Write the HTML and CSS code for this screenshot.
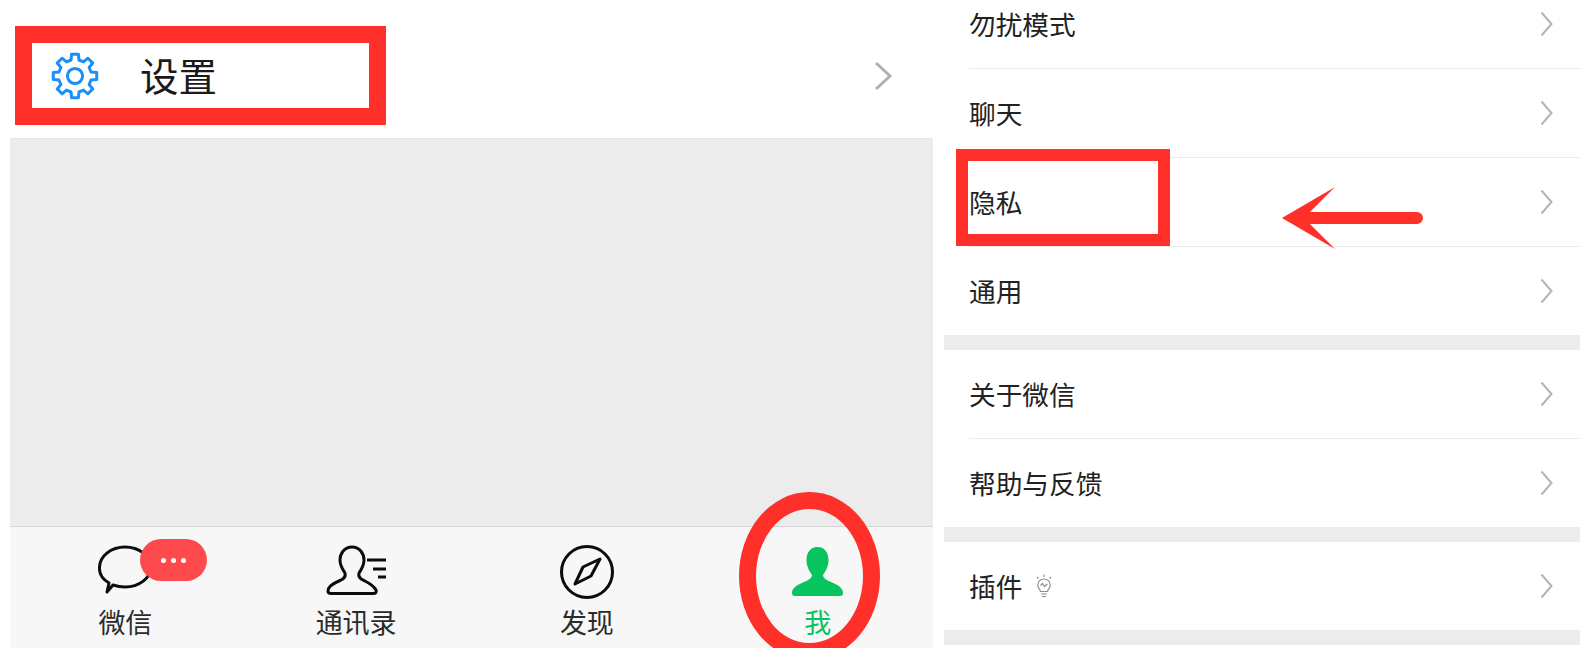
FILE: index.html
```html
<!DOCTYPE html>
<html lang="zh-CN">
<head>
    <meta charset="UTF-8">
    <title>微信设置</title>
    <link rel="stylesheet" href="styles.css">
</head>
<body>
    <div class="page">
        <div class="panel-left">
            <div class="settings-row">
                <svg class="gear" viewBox="-25 -25 50 50">
                    <polygon points="-3.99,-16.01 -3.44,-21.73 3.44,-21.73 3.99,-16.01 8.5,-14.14 12.93,-17.8 17.8,-12.93 14.14,-8.5 16.01,-3.99 21.73,-3.44 21.73,3.44 16.01,3.99 14.14,8.5 17.8,12.93 12.93,17.8 8.5,14.14 3.99,16.01 3.44,21.73 -3.44,21.73 -3.99,16.01 -8.5,14.14 -12.93,17.8 -17.8,12.93 -14.14,8.5 -16.01,3.99 -21.73,3.44 -21.73,-3.44 -16.01,-3.99 -14.14,-8.5 -17.8,-12.93 -12.93,-17.8 -8.5,-14.14"/>
                    <circle r="7.6"/>
                </svg>
                <span class="settings-label">设置</span>
                <svg class="chevron-big" viewBox="0 0 18 30"><polyline points="2,2 16,15 2,28"/></svg>
            </div>
            <div class="empty-area"></div>
            <div class="tabbar">
                <div class="tab">
                    <svg class="tab-icon icon-chat" width="56" height="50" viewBox="0 0 56 50">
                        <path class="line" d="M9 47 L11 38 C4 34 1 28 1.5 22 C2 11 13 2 27 2 C41 2 53 11 53 22 C53 33 41 42 27 42 C22 42 18 41 15 40 Z"/>
                    </svg>
                    <span>微信</span>
                    <div class="badge"><i></i><i></i><i></i></div>
                </div>
                <div class="tab">
                    <svg class="tab-icon" width="60" height="50" viewBox="0 0 60 50">
                        <path class="line" d="M26 2 C18 2 14 9 14 15 C14 21 17 25 19 28 C20 32 18 34 14 35.5 C8 38 2 41 2 46 C2 48 3 48.5 5 48.5 L47 48.5 C50 48.5 51 47 50 45 C48 41 43 38 38 35.5 C34 34 32 32 33 28 C35 25 38 21 38 15 C38 9 34 2 26 2 Z"/>
                        <path class="line" d="M41 15 H60 M47 24 H60 M52 32 H60"/>
                    </svg>
                    <span>通讯录</span>
                </div>
                <div class="tab">
                    <svg class="tab-icon" width="54" height="54" viewBox="0 0 54 54">
                        <circle class="line" cx="27" cy="27" r="25.5"/>
                        <path class="line" d="M40 14 L31 31 L15 39 L23 22 Z"/>
                    </svg>
                    <span>发现</span>
                </div>
                <div class="tab tab-active">
                    <svg class="tab-icon" width="51" height="49" viewBox="0 0 51 49">
                        <path d="M25.5 0 C33 0 36.5 6 36.5 13 C36.5 20 33 25 31 28 C31 31 34 33 40 35.5 C46 38 51 41 51 46 C51 48 50 49 48 49 L3 49 C1 49 0 48 0 46 C0 41 5 38 11 35.5 C17 33 20 31 20 28 C18 25 14.5 20 14.5 13 C14.5 6 18 0 25.5 0 Z"/>
                    </svg>
                    <span>我</span>
                </div>
            </div>
            <div class="mark-box"></div>
            <div class="mark-ring"></div>
        </div>

        <div class="panel-right">
            <div class="menu">
                <div class="group">
                    <div class="item"><span>勿扰模式</span><svg class="chevron" viewBox="0 0 13 26"><polyline points="1.5,1.5 11.5,13 1.5,24.5"/></svg></div>
                    <div class="item"><span>聊天</span><svg class="chevron" viewBox="0 0 13 26"><polyline points="1.5,1.5 11.5,13 1.5,24.5"/></svg></div>
                    <div class="item"><span>隐私</span><svg class="chevron" viewBox="0 0 13 26"><polyline points="1.5,1.5 11.5,13 1.5,24.5"/></svg></div>
                    <div class="item"><span>通用</span><svg class="chevron" viewBox="0 0 13 26"><polyline points="1.5,1.5 11.5,13 1.5,24.5"/></svg></div>
                </div>
                <div class="gap"></div>
                <div class="group">
                    <div class="item"><span>关于微信</span><svg class="chevron" viewBox="0 0 13 26"><polyline points="1.5,1.5 11.5,13 1.5,24.5"/></svg></div>
                    <div class="item"><span>帮助与反馈</span><svg class="chevron" viewBox="0 0 13 26"><polyline points="1.5,1.5 11.5,13 1.5,24.5"/></svg></div>
                </div>
                <div class="gap"></div>
                <div class="group">
                    <div class="item">
                        <span>插件</span>
                        <svg class="bulb" viewBox="0 0 18 24">
                            <path d="M5.5 17.5 C5 15 2.8 14 2.8 11 C2.8 7.5 5.5 5 9 5 C12.5 5 15.2 7.5 15.2 11 C15.2 14 13 15 12.5 17.5 Z"/>
                            <path d="M6 20 H12 M7 22.5 H11 M9 0.5 V3 M2 3 L3.5 4.5 M16 3 L14.5 4.5 M5.5 11.5 L7.5 9.5 L9.5 12.5 L12.5 10"/>
                        </svg>
                        <svg class="chevron" viewBox="0 0 13 26"><polyline points="1.5,1.5 11.5,13 1.5,24.5"/></svg>
                    </div>
                </div>
                <div class="gap"></div>
            </div>
            <div class="mark-box-small"></div>
            <svg class="mark-arrow" viewBox="0 0 141 62">
                <path d="M0 31 L53 0 L28 25 L135 25 A6 6 0 0 1 135 37 L28 37 L53 62 Z"/>
            </svg>
        </div>
    </div>
</body>
</html>
```

FILE: styles.css
```css
* {
    margin: 0;
    padding: 0;
    box-sizing: border-box;
}

body {
    background: #fff;
    font-family: "Noto Sans CJK SC", "Liberation Sans", sans-serif;
    color: #1f1f1f;
    overflow: hidden;
}

.page {
    display: flex;
    height: 648px;
    padding-left: 10px;
    gap: 11px;
}

/* left screenshot */
.panel-left {
    position: relative;
    width: 923px;
    height: 648px;
    display: flex;
    flex-direction: column;
    overflow: hidden;
}

.settings-row {
    height: 138px;
    flex-shrink: 0;
    display: flex;
    align-items: center;
    padding: 14px 41px 1px 40px;
    background: #fff;
}

.gear {
    width: 50px;
    height: 50px;
    margin-right: 40px;
}

.gear polygon,
.gear circle {
    fill: none;
    stroke: #1a8ffa;
    stroke-width: 3;
    stroke-linejoin: round;
}

.settings-label {
    font-size: 38.5px;
    line-height: 50px;
    margin-bottom: 4px;
    color: #1a1a1a;
}

.chevron-big {
    width: 18px;
    height: 30px;
    margin-left: auto;
}

.chevron-big polyline {
    fill: none;
    stroke: #b0b0b0;
    stroke-width: 3;
}

.empty-area {
    flex: 1;
    background: #ececec;
    border-top: 1px solid #e4e4e4;
}

.tabbar {
    height: 122px;
    flex-shrink: 0;
    display: grid;
    grid-template-columns: repeat(4, 1fr);
    background: #f7f7f7;
    border-top: 1px solid #d6d6d6;
}

.tab {
    position: relative;
    display: flex;
    flex-direction: column;
    align-items: center;
    padding-top: 18px;
    font-size: 27px;
    color: #2b2b2b;
}

.tab span {
    position: absolute;
    top: 77px;
    line-height: 36px;
}

.tab-icon .line {
    fill: none;
    stroke: #0c0c0c;
    stroke-width: 3;
    stroke-linejoin: round;
}

.icon-chat {
    margin-left: 1px;
}

.tab-active {
    color: #08c45f;
}

.tab-active .tab-icon {
    fill: #08c45f;
    margin-top: 2px;
}

.badge {
    position: absolute;
    left: 130px;
    top: 12px;
    width: 67px;
    height: 42px;
    border-radius: 21px;
    background: #ff4a4d;
    display: flex;
    align-items: center;
    justify-content: center;
    gap: 5px;
}

.badge i {
    width: 5px;
    height: 5px;
    border-radius: 50%;
    background: #fff;
}

.mark-box {
    position: absolute;
    left: 5px;
    top: 26px;
    width: 371px;
    height: 99px;
    border: 17px solid #ff3029;
}

.mark-ring {
    position: absolute;
    left: 729px;
    top: 492px;
    width: 141px;
    height: 168px;
    border: 17px solid #ff3029;
    border-radius: 50%;
}

/* right screenshot */
.panel-right {
    position: relative;
    width: 636px;
    height: 648px;
    overflow: hidden;
}

.menu {
    margin-top: -20px;
}

.item {
    height: 89px;
    margin-left: 25px;
    padding-right: 27px;
    display: flex;
    align-items: center;
    font-size: 26.7px;
    color: #222;
    border-bottom: 1px solid #ececec;
}

.item span {
    margin-bottom: 2px;
}

.group .item:last-child {
    height: 88px;
    border-bottom: none;
}

.chevron {
    width: 13px;
    height: 26px;
    margin-left: auto;
}

.chevron polyline {
    fill: none;
    stroke: #b4b4b4;
    stroke-width: 2;
}

.bulb {
    width: 18px;
    height: 24px;
    margin-left: 13px;
}

.bulb path {
    fill: none;
    stroke: #8f8f8f;
    stroke-width: 1.2;
}

.gap {
    height: 15px;
    background: #ececec;
}

.mark-box-small {
    position: absolute;
    left: 12px;
    top: 149px;
    width: 214px;
    height: 97px;
    border: 12px solid #ff3029;
}

.mark-arrow {
    position: absolute;
    left: 338px;
    top: 187px;
    width: 141px;
    height: 62px;
    fill: #ff3029;
}
```
